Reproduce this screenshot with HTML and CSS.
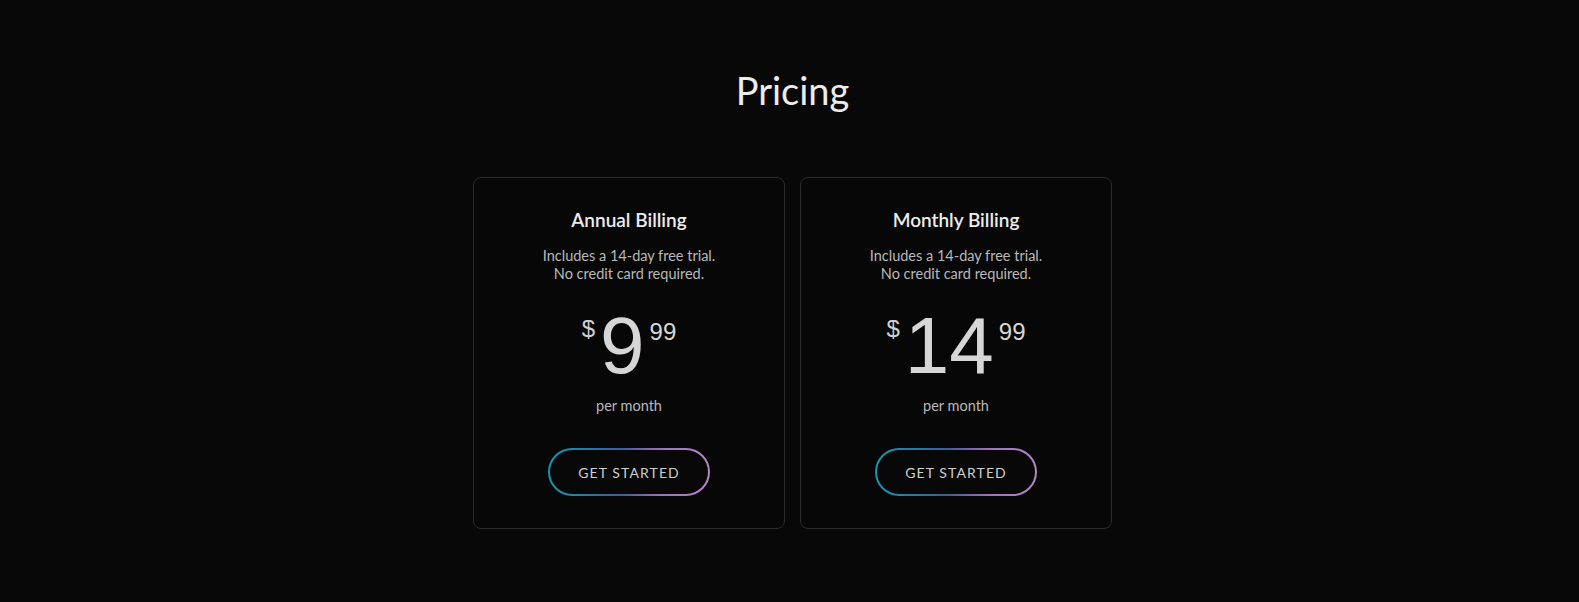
FILE: index.html
```html
<!DOCTYPE html>
<html lang="en">
<head>
    <meta charset="UTF-8">
    <title>Pricing</title>
    <link rel="stylesheet" href="styles.css">
</head>
<body>
    <section class="pricing">
        <h1 class="pricing-title">Pricing</h1>
        <div class="plans">
            <div class="plan">
                <h2 class="plan-name">Annual Billing</h2>
                <p class="plan-note">Includes a 14-day free trial.<br/>No credit card required.</p>
                <div class="price">
                    <span class="price-currency">$</span>
                    <span class="price-whole">9</span>
                    <span class="price-cents">99</span>
                </div>
                <p class="price-period">per month</p>
                <a class="btn-start" href="#">GET STARTED</a>
            </div>
            <div class="plan">
                <h2 class="plan-name">Monthly Billing</h2>
                <p class="plan-note">Includes a 14-day free trial.<br/>No credit card required.</p>
                <div class="price">
                    <span class="price-currency">$</span>
                    <span class="price-whole">14</span>
                    <span class="price-cents">99</span>
                </div>
                <p class="price-period">per month</p>
                <a class="btn-start" href="#">GET STARTED</a>
            </div>
        </div>
    </section>
</body>
</html>
```

FILE: styles.css
```css
* { margin: 0; padding: 0; box-sizing: border-box; }

body {
    background-color: #080808;
    color: #d8d8d8;
    font-family: Lato, "Open Sans", sans-serif;
}

.pricing {
    display: flex; flex-direction: column; align-items: center;
    padding: 66px 0 0 6px;
}
.pricing-title {
    font-size: 38px; font-weight: 400; line-height: 48px;
    color: #ececec;
}

/* two cards side by side */
.plans {
    display: flex; gap: 15px;
    margin-top: 63px;
}
.plan {
    width: 312px; height: 352px;
    display: flex; flex-direction: column; align-items: center;
    padding-top: 30px;
    border: 1px solid #2b2b2b; border-radius: 8px;
    background-color: #070707;
}
.plan-name {
    font-size: 19px; font-weight: 600; line-height: 24px;
    color: #ececec;
}
.plan-note {
    margin-top: 15px;
    font-size: 14.5px; line-height: 18px; text-align: center;
    color: #b9b9b9;
}

/* price: currency, big number, cents */
.price {
    display: flex; align-items: flex-start;
    margin-top: 28px; height: 76px;
}
.price-currency {
    font-family: "Liberation Sans", Arial, sans-serif;
    font-size: 24px; line-height: 24px; margin-top: 6px; margin-right: 5px;
    color: #d0d0d0;
}
.price-whole {
    font-family: "Liberation Sans", Arial, sans-serif;
    font-size: 80px; line-height: 70px;
    color: #d6d6d6;
}
.price-cents {
    font-family: "Liberation Sans", Arial, sans-serif;
    font-size: 24px; line-height: 24px; margin-top: 9px; margin-left: 5px;
    color: #d6d6d6;
}
.price-period {
    margin-top: 10px;
    font-size: 14.5px; line-height: 18px;
    color: #b9b9b9;
}

/* pill button with gradient outline */
.btn-start {
    margin-top: 33px;
    width: 162px; height: 48px;
    display: flex; align-items: center; justify-content: center;
    border: 2px solid transparent; border-radius: 24px;
    background: linear-gradient(#080808, #080808) padding-box,
                linear-gradient(90deg, #1597b1 0%, #3f5c9c 45%, #9c72b8 70%, #b487c8 100%) border-box;
    font-size: 14px; letter-spacing: 1.1px;
    color: #cfcfcf; text-decoration: none;
}
```
